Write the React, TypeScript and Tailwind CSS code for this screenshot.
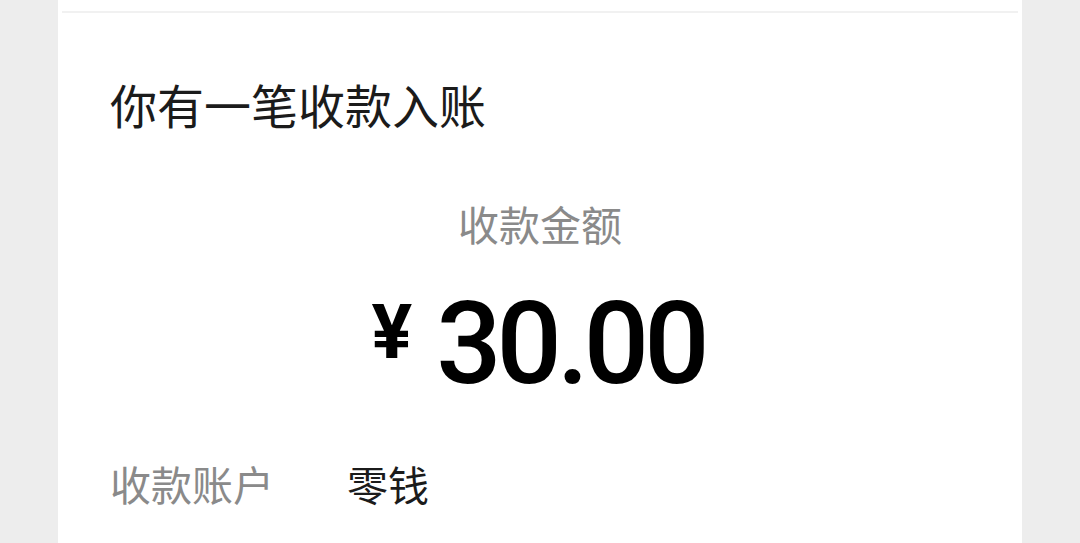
import React from "react";

export default function App() {
  const cjk = { fontFamily: '"Noto Sans CJK SC", "Noto Sans", sans-serif' };
  return (
    <div className="w-[1080px] h-[543px] bg-[#ededed] overflow-hidden flex justify-center" style={cjk}>
      <div className="w-[964px] bg-white flex flex-col">
        <div className="h-[11px]" />
        <div className="h-[2px] bg-[#f1f1f1] mx-[4px]" />
        <div className="pl-[52px] pt-[67px] text-[47px] leading-none text-[#1b1b1b]">
          你有一笔收款入账
        </div>
        <div className="mt-[76px] text-center text-[41px] leading-none text-[#8a8a8a]">
          收款金额
        </div>
        <div className="mt-[42px] h-[115px] text-center text-black leading-none whitespace-nowrap" style={{ fontFamily: 'Roboto, "Liberation Sans", sans-serif' }}>
          <span className="text-[76px] font-bold align-[25px] mr-[24px] ml-[-4px]">¥</span>
          <span className="text-[115px] font-medium tracking-[-5px]">30.00</span>
        </div>
        <div className="mt-[62px] pl-[52px] flex items-center text-[41px] leading-none">
          <span className="text-[#8a8a8a] w-[237px]">收款账户</span>
          <span className="text-[#1b1b1b]">零钱</span>
        </div>
      </div>
    </div>
  );
}
